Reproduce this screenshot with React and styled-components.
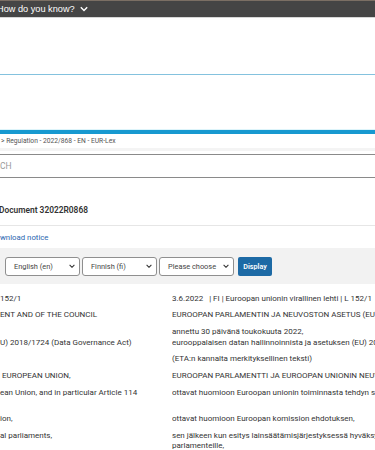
import React from "react";
import styled, { createGlobalStyle } from "styled-components";

const GlobalStyle = createGlobalStyle`
  html, body {
    margin: 0;
    padding: 0;
    background: #fff;
    overflow: hidden;
  }
  body {
    width: 375px;
    font-family: Roboto, "Liberation Sans", Arial, sans-serif;
    color: #333;
  }
`;

const TopBar = styled.div`
  height: 16px;
  background: #454545;
  border-top: 1px solid #7b6f64;
  border-bottom: 1px solid #d6d6d6;
  display: flex;
  align-items: center;
`;

const Hint = styled.span`
  margin-left: -3px;
  font-family: "Liberation Sans", Arial, sans-serif;
  font-size: 9.2px;
  color: #fff;
  display: flex;
  align-items: center;
  gap: 5px;
`;

const Banner = styled.div`
  height: ${({ h }) => h}px;
  border-bottom: 1px solid ${({ line }) => line};
`;

const BlueRule = styled.div`
  height: 4px;
  background: #1799d0;
`;

const Breadcrumb = styled.div`
  height: 14px;
  display: flex;
  align-items: center;
  padding-left: 1px;
  font-size: 6.7px;
  color: #555;
  border-bottom: 3px solid #f4f4f4;
`;

const SearchBox = styled.div`
  margin-top: 3px;
  height: 22px;
  border-top: 1px solid #8a8a8a;
  border-bottom: 1px solid #8a8a8a;
  display: flex;
  align-items: center;
  font-size: 8.5px;
  color: #9a9a9a;
`;

const DocHead = styled.div`
  height: 47px;
  border-bottom: 1px solid #e6e6e6;
  display: flex;
  align-items: flex-end;
`;

const DocTitle = styled.h1`
  margin: 0 0 10px -1px;
  font-size: 8.4px;
  font-weight: 600;
  color: #333;
`;

const NoticeRow = styled.div`
  height: 22px;
  display: flex;
  align-items: center;
`;

const Link = styled.a`
  font-size: 7.8px;
  color: #2a66b0;
  text-decoration: none;
`;

const LangBar = styled.div`
  height: 36px;
  background: #f2f2f2;
  display: flex;
  align-items: center;
  padding-left: 5px;
  gap: 2px;
`;

const SelectBox = styled.div`
  box-sizing: border-box;
  width: 75px;
  height: 19px;
  margin-right: ${({ space }) => space || 0}px;
  background: #fff;
  border: 1px solid #8f8f8f;
  border-radius: 3px;
  display: flex;
  align-items: center;
  justify-content: space-between;
  padding: 0 4px 0 8px;
  font-size: 7.4px;
  color: #444;
`;

const DisplayButton = styled.button`
  height: 19px;
  width: 34px;
  padding: 0;
  border: none;
  border-radius: 2px;
  background: #1d6aa5;
  color: #fff;
  font-family: inherit;
  font-size: 7.2px;
  font-weight: 600;
`;

const TextTable = styled.div`
  padding-top: 10px;
  font-size: 8px;
  line-height: 10px;
  color: #333;
`;

const Row = styled.div`
  display: grid;
  grid-template-columns: 172px 1fr;
  margin-top: ${({ gap }) => gap}px;
`;

const Cell = styled.div`
  white-space: pre;
  overflow: hidden;
  min-height: ${({ lines }) => (lines || 1) * 10}px;
`;

const Chevron = ({ color = "#fff", size = 8 }) => (
  <svg width={size} height={size * 0.7} viewBox="0 0 10 7">
    <path d="M1 1.5 L5 5.5 L9 1.5" fill="none" stroke={color} strokeWidth="1.8" />
  </svg>
);

const rows = [
  { gap: 0, left: "152/1", right: "3.6.2022   | FI | Euroopan unionin virallinen lehti | L 152/1" },
  { gap: 6, left: "ENT AND OF THE COUNCIL", right: "EUROOPAN PARLAMENTIN JA NEUVOSTON ASETUS (EU) 2022/868" },
  { gap: 7, left: "", right: "annettu 30 päivänä toukokuuta 2022," },
  { gap: 1, left: "U) 2018/1724 (Data Governance Act)", right: "eurooppalaisen datan hallinnoinnista ja asetuksen (EU) 2018/1724 muuttamisesta" },
  { gap: 6, left: "", right: "(ETA:n kannalta merkityksellinen teksti)" },
  { gap: 7, left: " EUROPEAN UNION,", right: "EUROOPAN PARLAMENTTI JA EUROOPAN UNIONIN NEUVOSTO, jotka" },
  { gap: 7, left: "ean Union, and in particular Article 114", right: "ottavat huomioon Euroopan unionin toiminnasta tehdyn sopimuksen", lines: 2 },
  { gap: 6, left: "ion,", right: "ottavat huomioon Euroopan komission ehdotuksen," },
  { gap: 7, left: "al parliaments,", right: "sen jälkeen kun esitys lainsäätämisjärjestyksessä hyväksyttäväksi\nparlamenteille,", lines: 2 },
];

export default function App() {
  return (
    <>
      <GlobalStyle />
      <TopBar>
        <Hint>
          How do you know?
          <Chevron />
        </Hint>
      </TopBar>
      <Banner h={56} line="#84c2de" />
      <Banner h={54} line="#ddf4fa" />
      <BlueRule />
      <Breadcrumb>&gt; Regulation - 2022/868 - EN - EUR-Lex</Breadcrumb>
      <SearchBox>CH</SearchBox>
      <DocHead>
        <DocTitle>Document 32022R0868</DocTitle>
      </DocHead>
      <NoticeRow>
        <Link href="#">wnload notice</Link>
      </NoticeRow>
      <LangBar>
        <SelectBox>
          English (en)
          <Chevron color="#333" size={6} />
        </SelectBox>
        <SelectBox>
          Finnish (fi)
          <Chevron color="#333" size={6} />
        </SelectBox>
        <SelectBox space={2}>
          Please choose
          <Chevron color="#333" size={6} />
        </SelectBox>
        <DisplayButton>Display</DisplayButton>
      </LangBar>
      <TextTable>
        {rows.map((r, i) => (
          <Row key={i} gap={r.gap}>
            <Cell lines={r.lines}>{r.left}</Cell>
            <Cell lines={r.lines}>{r.right}</Cell>
          </Row>
        ))}
      </TextTable>
    </>
  );
}
